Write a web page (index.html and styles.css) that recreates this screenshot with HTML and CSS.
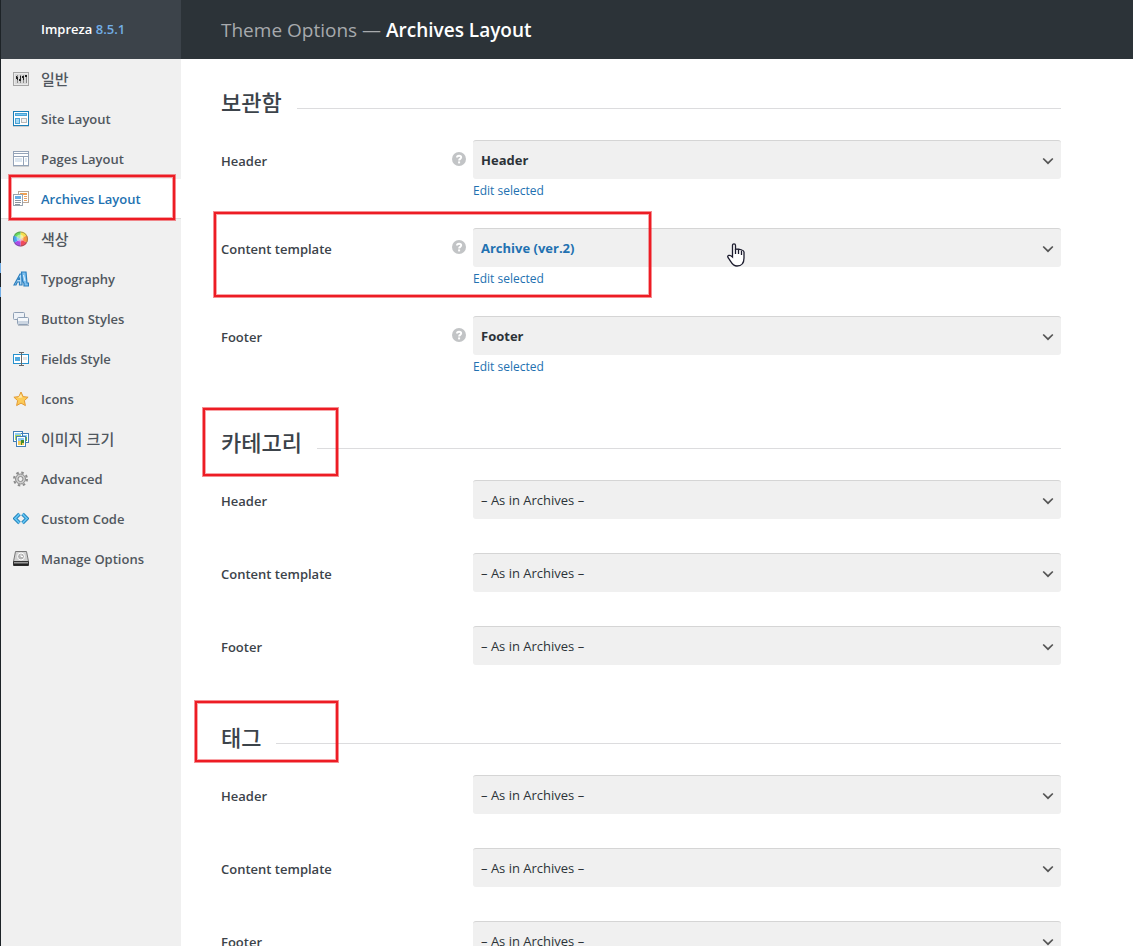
FILE: index.html
```html
<!DOCTYPE html>
<html lang="ko">
<head>
  <meta charset="UTF-8">
  <meta name="viewport" content="width=device-width, initial-scale=1.0">
  <title>Theme Options</title>
  <link rel="stylesheet" href="styles.css">
</head>
<body>
  <svg class="defs" aria-hidden="true">
    <defs>
      <symbol id="chevron" viewBox="0 0 12 8">
        <path d="M1.200 1.500 6 6.200l4.800-4.700" fill="none" stroke="#555" stroke-width="1.700"/>
      </symbol>
      <symbol id="help" viewBox="0 0 14 14">
        <circle cx="7" cy="7" r="7" fill="#c2c4c6"/>
        <path d="M5 5.500C5 3.200 9.200 3.200 9.200 5.500 9.200 6.900 7.100 6.800 7.100 8.400" fill="none" stroke="#fff" stroke-width="1.900"/>
        <rect x="6.100" y="9.400" width="2" height="2" fill="#fff"/>
      </symbol>
    </defs>
  </svg>

  <div class="page">
    <div class="edge"><i></i><i></i></div>
    <aside class="side">
      <div class="brand">Impreza <span>8.5.1</span></div>
      <nav class="menu">
        <a class="item korean" href="#general">
          <svg class="icon" viewBox="0 0 16 16" shape-rendering="crispEdges"><path d="M.5 1.500h15v13H.5z" fill="#e9e9e9" stroke="#a5a5a5"/><path d="M2 3h12v10H2z" fill="#d8d8d8"/><path d="M4.500 4v8M7.500 4v8M10.500 4v8M13.500 4v8" stroke="#888"/><path d="M3 5h1v3H3zM4 6h1v3H4zM6 8h2v2H6zM7 5h1v3H7zM9 5h2v2H9zM10 7h1v2h-1zM12 4h2v2h-2z" fill="#222"/></svg>
          일반
        </a>
        <a class="item" href="#site">
          <svg class="icon" viewBox="0 0 16 16" shape-rendering="crispEdges"><path d="M.5.5h15v14H.5z" fill="#fff" stroke="#1b7fb8"/><path d="M2.500 2.500h11v2h-11z" fill="#7cc8ef" stroke="#4aa3d6"/><path d="M2.500 7.500h4v5h-4z" fill="#a6daf5" stroke="#4aa3d6"/><path d="M8.500 7.500h5v4h-5z" fill="#f3f3f3" stroke="#b9b9b9"/><path d="M0 15h16v1H0z" fill="#ccc"/></svg>
          Site Layout
        </a>
        <a class="item" href="#pages">
          <svg class="icon" viewBox="0 0 16 16" shape-rendering="crispEdges"><path d="M.5.5h15v14H.5z" fill="#fff" stroke="#94a3b8"/><path d="M1 2.500h14M1 5.500h14M10.500 6v8" stroke="#94a3b8"/><path d="M2 7h7v4H2zM12 7h2v4h-2z" fill="#dce6f0"/><path d="M0 15h16v1H0z" fill="#ccc"/></svg>
          Pages Layout
        </a>
        <a class="item active" href="#archives">
          <svg class="icon" viewBox="0 0 16 16" shape-rendering="crispEdges"><path d="M5.500.5h10v11h-10z" fill="#fff" stroke="#b9a898"/><path d="M7 2h7v2H7z" fill="#f0a050"/><path d="M11 5.500h3M11 7.500h3M11 9.500h3" stroke="#e8a266"/><path d="M.5 3.500h9v11h-9z" fill="#fff" stroke="#9aa3ad"/><path d="M2 5h6v3H2z" fill="#66aee6"/><path d="M2 9.500h6M2 11.500h6M2 13.500h5" stroke="#8b949e"/></svg>
          Archives Layout
          <span class="mark mark-menu"></span>
        </a>
        <a class="item korean" href="#colors">
          <svg class="icon" viewBox="0 0 16 16"><path d="M7.500 8V.5A7.500 7.500 0 0 1 14 4.250z" fill="#f6e04c"/><path d="M7.500 8 14 4.250a7.500 7.500 0 0 1 0 7.500z" fill="#f9953e"/><path d="M7.500 8 14 11.750A7.500 7.500 0 0 1 7.500 15.500z" fill="#f04a5c"/><path d="M7.500 8v7.500A7.500 7.500 0 0 1 1 11.750z" fill="#a94be8"/><path d="M7.500 8 1 11.750a7.500 7.500 0 0 1 0-7.500z" fill="#46a5f2"/><path d="M7.500 8 1 4.250A7.500 7.500 0 0 1 7.500.5z" fill="#63dc5b"/><circle cx="7" cy="7" r="3.500" fill="#fff" opacity=".45"/><circle cx="7.500" cy="8" r="7" fill="none" stroke="#555" stroke-opacity=".5"/></svg>
          색상
        </a>
        <a class="item" href="#typography">
          <svg class="icon" viewBox="0 0 16 16"><path d="M1 14 7 3h2v11H6.500v-3H4.300L3 14zM5.500 8.500h1V6.500z" fill="#b5dcf7" stroke="#2b7fbe" stroke-width="1.200"/><path d="M8.500 1H13l1 11h1.500v3H11v-2.500L9.500 10z" fill="#7dc0f0" stroke="#2b7fbe" stroke-width="1.200"/><path d="m10.500 4 1.500 6" stroke="#e8f5ff"/></svg>
          Typography
        </a>
        <a class="item" href="#buttons">
          <svg class="icon" viewBox="0 0 16 16"><rect x=".5" y="1.500" width="11" height="7" rx="1" fill="#eef2f7" stroke="#8fa0b5"/><rect x="4.500" y="6.500" width="11" height="7" rx="1" fill="#f5f8fb" stroke="#8fa0b5"/><path d="M5 10h10v3H5z" fill="#ccd6e2"/><path d="M5 14.500h11" stroke="#b8bec6"/></svg>
          Button Styles
        </a>
        <a class="item" href="#fields">
          <svg class="icon" viewBox="0 0 16 16" shape-rendering="crispEdges"><path d="M.5 3.500h15v9H.5z" fill="#fff" stroke="#2792ce"/><path d="M2 6h5v4H2z" fill="#4fa9e0"/><path d="M10 6h4v3h-4z" fill="#e3e3e3"/><path d="M8.500 1v13M6 1.500h5M6 14.500h5" stroke="#666"/></svg>
          Fields Style
        </a>
        <a class="item" href="#icons">
          <svg class="icon" viewBox="0 0 16 16"><path d="m8 1 2.100 4.600 5 .6-3.700 3.400 1 5L8 12.100l-4.400 2.500 1-5L.9 6.200l5-.6z" fill="#fccb57" stroke="#e39a35" stroke-linejoin="round"/><path d="m8 3 1.300 3.500L5 7z" fill="#ffe9a8"/></svg>
          Icons
        </a>
        <a class="item korean" href="#images">
          <svg class="icon" viewBox="0 0 16 16" shape-rendering="crispEdges"><path d="M.5.5h9v10h-9zM6.500 2.500h9v9h-9z" fill="#fff" stroke="#427fb5"/><path d="M2 2h6v7H2z" fill="#a9d860"/><path d="M2 2h6v2H2zM10 4h4v2h-4z" fill="#8cccf2"/><path d="M10 6h4v4h-4z" fill="#65b344"/><path d="M3.500 5.500h9v10h-9z" fill="#fff" stroke="#427fb5"/><path d="M5 7h6v3H5z" fill="#8cccf2"/><path d="M5 10h6v4H5z" fill="#f2ca58"/><path d="M8 9h3v3H9v2H8z" fill="#408b2c"/></svg>
          이미지 크기
        </a>
        <a class="item" href="#advanced">
          <svg class="icon" viewBox="0 0 16 16"><circle cx="7.500" cy="8" r="6.500" fill="none" stroke="#8c8c8c" stroke-width="2" stroke-dasharray="2.500 2.605"/><circle cx="7.500" cy="8" r="5" fill="#ccc" stroke="#8c8c8c"/><circle cx="7.500" cy="8" r="2.500" fill="#f0f0f0" stroke="#8c8c8c"/></svg>
          Advanced
        </a>
        <a class="item" href="#code">
          <svg class="icon" viewBox="0 0 16 16"><path d="M6.500 3 2 7.500 6.500 12" fill="none" stroke="#1679b3" stroke-width="3.600"/><path d="M9.500 3 14 7.500 9.500 12" fill="none" stroke="#1679b3" stroke-width="3.600"/><path d="M6.500 3 2 7.500 6.500 12M9.500 3 14 7.500 9.500 12" fill="none" stroke="#62c3f2" stroke-width="1.800"/></svg>
          Custom Code
        </a>
        <a class="item" href="#manage">
          <svg class="icon" viewBox="0 0 16 16"><path d="M2.500.5h11l2 10H.5z" fill="#d0d0d0" stroke="#777"/><path d="M.5 10.500h15v4H.5z" fill="#999" stroke="#333"/><path d="M1 13.500h14" stroke="#222" stroke-width="2"/><circle cx="8" cy="5.500" r="3.500" fill="#b4b4b4" stroke="#fff"/><path d="M8 3.500v2h2" stroke="#fff" fill="none"/></svg>
          Manage Options
        </a>
      </nav>
    </aside>

    <div class="content">
      <header class="top">
        <h1>Theme Options — <strong>Archives Layout</strong></h1>
      </header>
      <main class="options">
        <section>
          <h2 class="title"><span>보관함</span></h2>
          <div class="row">
            <label for="archive-header">Header</label>
            <svg class="help"><use href="#help"/></svg>
            <div class="field">
              <div class="select chosen">
                <select id="archive-header"><option>Header</option></select>
                <svg class="chevron"><use href="#chevron"/></svg>
              </div>
              <a class="edit" href="#edit">Edit selected</a>
            </div>
          </div>
          <div class="row">
            <label for="archive-content">Content template</label>
            <svg class="help"><use href="#help"/></svg>
            <div class="field">
              <div class="select chosen hover">
                <select id="archive-content"><option>Archive (ver.2)</option></select>
                <svg class="chevron"><use href="#chevron"/></svg>
                <svg class="pointer" viewBox="0 0 18 24"><path d="M5.500 14V2.500c0-2.300 3-2.300 3 0V6c4 0 8.500 1 8.500 3v6c0 5-2.500 8-7 8-5 0-6-5-9-8.500-1.200-2 1.500-3.200 4.500-.5z" fill="#fff" stroke="#1c1c2e" stroke-width="1.300"/><path d="M8.500 6v5M11.500 7v4M14.500 7.500V12" fill="none" stroke="#1c1c2e" stroke-width="1.300"/></svg>
              </div>
              <a class="edit" href="#edit">Edit selected</a>
            </div>
            <span class="mark mark-row"></span>
          </div>
          <div class="row">
            <label for="archive-footer">Footer</label>
            <svg class="help"><use href="#help"/></svg>
            <div class="field">
              <div class="select chosen">
                <select id="archive-footer"><option>Footer</option></select>
                <svg class="chevron"><use href="#chevron"/></svg>
              </div>
              <a class="edit" href="#edit">Edit selected</a>
            </div>
          </div>
        </section>

        <section>
          <h2 class="title"><span>카테고리</span><i class="mark mark-category"></i></h2>
          <div class="row">
            <label for="category-header">Header</label>
            <div class="field">
              <div class="select">
                <select id="category-header"><option>– As in Archives –</option></select>
                <svg class="chevron"><use href="#chevron"/></svg>
              </div>
            </div>
          </div>
          <div class="row">
            <label for="category-content">Content template</label>
            <div class="field">
              <div class="select">
                <select id="category-content"><option>– As in Archives –</option></select>
                <svg class="chevron"><use href="#chevron"/></svg>
              </div>
            </div>
          </div>
          <div class="row">
            <label for="category-footer">Footer</label>
            <div class="field">
              <div class="select">
                <select id="category-footer"><option>– As in Archives –</option></select>
                <svg class="chevron"><use href="#chevron"/></svg>
              </div>
            </div>
          </div>
        </section>

        <section>
          <h2 class="title"><span>태그</span><i class="mark mark-tag"></i></h2>
          <div class="row">
            <label for="tag-header">Header</label>
            <div class="field">
              <div class="select">
                <select id="tag-header"><option>– As in Archives –</option></select>
                <svg class="chevron"><use href="#chevron"/></svg>
              </div>
            </div>
          </div>
          <div class="row">
            <label for="tag-content">Content template</label>
            <div class="field">
              <div class="select">
                <select id="tag-content"><option>– As in Archives –</option></select>
                <svg class="chevron"><use href="#chevron"/></svg>
              </div>
            </div>
          </div>
          <div class="row">
            <label for="tag-footer">Footer</label>
            <div class="field">
              <div class="select">
                <select id="tag-footer"><option>– As in Archives –</option></select>
                <svg class="chevron"><use href="#chevron"/></svg>
              </div>
            </div>
          </div>
        </section>
      </main>
    </div>
  </div>
</body>
</html>
```
FILE: styles.css
```css
* {
  box-sizing: border-box;
}

body {
  margin: 0;
  font-family: "Open Sans", "Noto Sans CJK KR", sans-serif;
  font-size: 13px;
  line-height: 20px;
  color: #3c434a;
  background: #fff;
}

a {
  color: #2271b1;
  text-decoration: none;
}

.defs {
  display: none;
}

.page {
  display: flex;
  height: 100vh;
  overflow: hidden;
}

/* sliver of the admin menu */
.edge {
  width: 1px;
  padding-top: 263px;
  background: #1d2327;
}

.edge i {
  display: block;
  height: 10px;
  margin-bottom: 14px;
  background: #72aee6;
}

.side {
  width: 180px;
  flex-shrink: 0;
  background: #f0f0f0;
}

.brand {
  height: 59px;
  padding-left: 40px;
  line-height: 59px;
  font-weight: 600;
  color: #fff;
  background: #3c434a;
}

.brand span {
  color: #72aee6;
}

.item {
  position: relative;
  display: flex;
  align-items: center;
  gap: 12px;
  height: 40px;
  padding-left: 12px;
  font-weight: 600;
  color: #50575e;
}

.item.korean {
  font-family: "Noto Sans CJK KR", sans-serif;
  font-size: 15px;
  font-weight: 500;
}

.item.active {
  color: #2271b1;
  background: #fff;
  border-bottom: 1px solid #ddd;
}

.icon {
  width: 16px;
  height: 16px;
}

.content {
  flex: 1;
  min-width: 0;
}

.top {
  height: 59px;
  padding-left: 40px;
  background: #2c3338;
}

.top h1 {
  margin: 0;
  font-size: 19px;
  line-height: 60px;
  font-weight: 400;
  color: #a7aaad;
}

.top strong {
  font-weight: 600;
  color: #fff;
}

.options {
  padding: 5px 72px 0 40px;
}

.title {
  position: relative;
  display: flex;
  gap: 15px;
  height: 76px;
  margin: 0;
  padding-top: 24px;
  font-size: 22px;
  line-height: 28px;
  font-weight: 500;
}

.title::after {
  content: "";
  flex: 1;
  height: 1px;
  margin-top: 20px;
  background: #dcdcde;
}

.row {
  position: relative;
  display: flex;
  margin-bottom: 34px;
}

.row label {
  flex: 1;
  padding-top: 11px;
  font-weight: 600;
}

.help {
  width: 14px;
  height: 14px;
  margin: 12px 7px 0 0;
}

.field {
  width: 70%;
}

.select {
  position: relative;
}

.select select {
  display: block;
  width: 100%;
  height: 39px;
  padding: 0 32px 0 8px;
  border: 0;
  border-top: 1px solid #d5d5d5;
  border-radius: 3px;
  font: inherit;
  color: #2c3338;
  background: #f0f0f0;
  appearance: none;
}

.chosen select {
  font-weight: 700;
}

.hover select {
  color: #2271b1;
}

.chevron {
  position: absolute;
  top: 17px;
  right: 7px;
  width: 12px;
  height: 8px;
  pointer-events: none;
}

.pointer {
  position: absolute;
  top: 15px;
  left: 254px;
  width: 18px;
  height: 24px;
  pointer-events: none;
}

.edit {
  display: block;
  height: 15px;
  padding-top: 2px;
  font-size: 12px;
}

/* highlight frames */
.mark {
  position: absolute;
  border: 2px solid #ed1c24;
  box-shadow: 0 0 0 1px rgba(237, 28, 36, 0.5), inset 0 0 0 1px rgba(237, 28, 36, 0.4);
  pointer-events: none;
}

.mark-menu {
  top: -4px;
  left: 8px;
  width: 166px;
  height: 45px;
}

.mark-row {
  top: -16px;
  left: -7px;
  width: 437px;
  height: 85px;
}

.mark-category {
  top: 4px;
  left: -18px;
  width: 135px;
  height: 68px;
}

.mark-tag {
  top: 2px;
  left: -26px;
  width: 143px;
  height: 61px;
}
```
